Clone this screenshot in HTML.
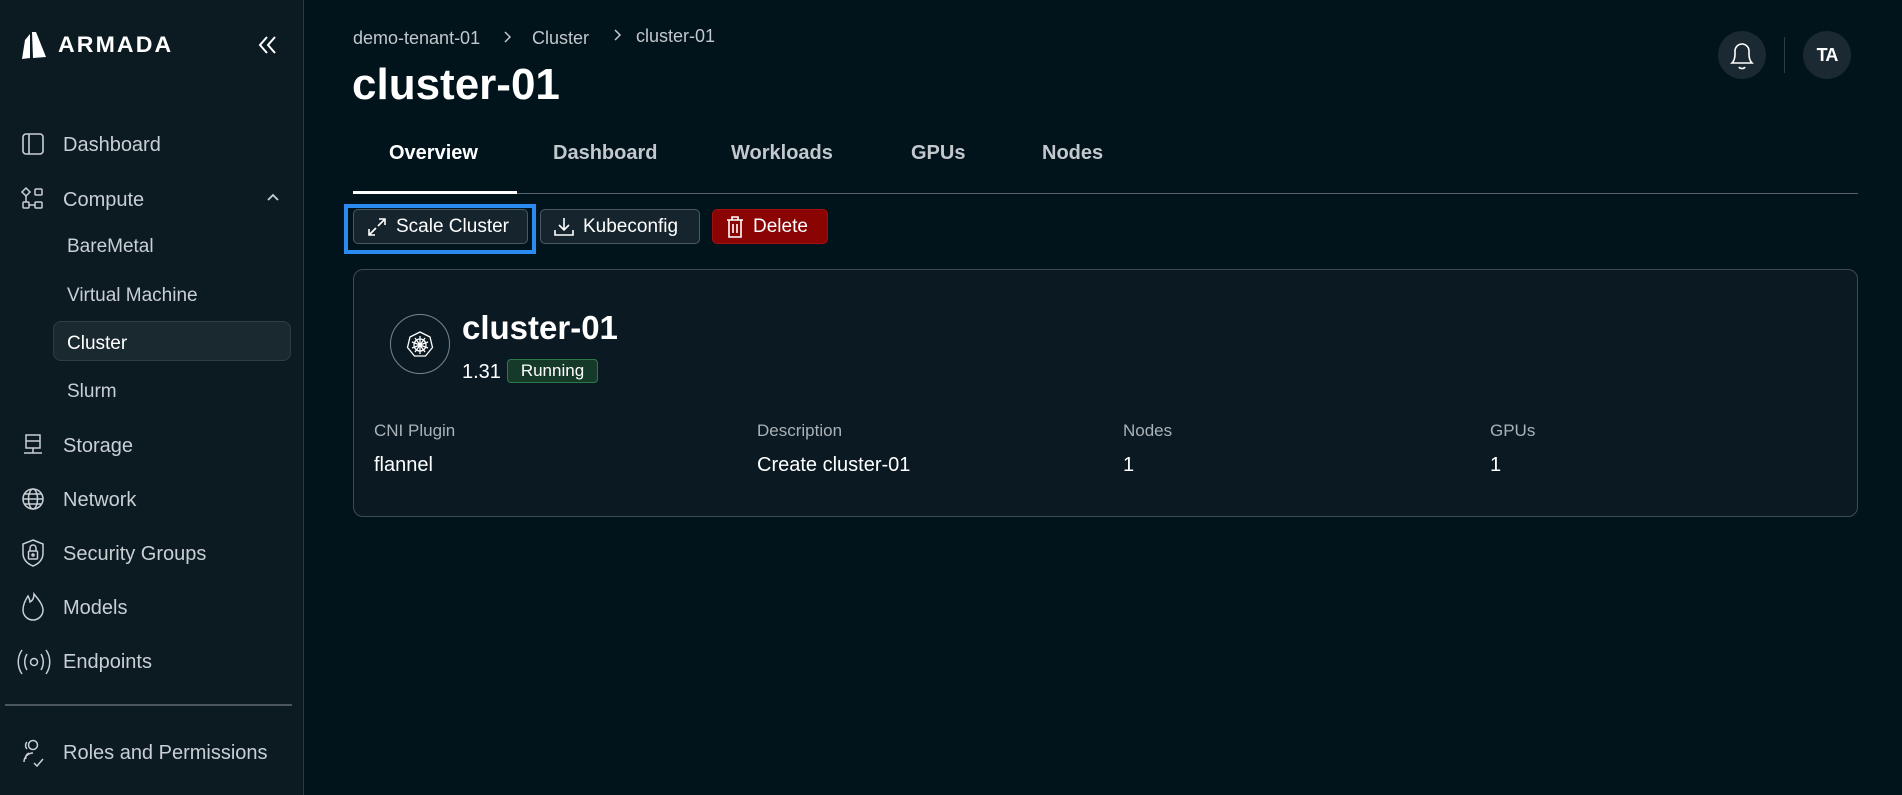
<!DOCTYPE html>
<html><head><meta charset="utf-8"><style>
*{margin:0;padding:0;box-sizing:border-box}
body{width:1902px;height:795px;background:#01131b;font-family:"Liberation Sans",sans-serif;color:#fff;position:relative;overflow:hidden}
.a{position:absolute;white-space:nowrap}
.side{position:absolute;left:0;top:0;width:304px;height:795px;background:#0c1a22;border-right:1px solid #2a3a42}
.nav{position:absolute;left:63px;font-size:20px;color:#c9d0d4;line-height:24px}
.sub{left:67px;font-size:19px}
.ic{position:absolute;left:20px;width:26px;height:26px}
.tab{position:absolute;top:142px;font-size:20px;font-weight:bold;color:#c2c8cc}
.btn{position:absolute;top:209px;height:35px;border:1px solid #4a5a62;border-radius:5px;background:#16252d;font-size:19px;color:#fff;display:flex;align-items:center;padding-left:12px;gap:8px}
.lbl{position:absolute;top:421px;font-size:17px;color:#aab2b7}
.val{position:absolute;top:454px;font-size:20px;color:#fff}
</style></head><body>
<div class="side">
 <svg class="a" style="left:18px;top:30px" width="32" height="30" viewBox="0 0 32 30"><path d="M4 29 L7 10 L12 4 L12 28 Z" fill="#fff"/><path d="M14 2 L18 2 L28 27 L15 28 Z" fill="#fff"/></svg>
 <div class="a" style="left:58px;top:32px;font-size:22px;font-weight:bold;letter-spacing:2px;transform:scaleX(1.05);transform-origin:left">ARMADA</div>
 <svg class="a" style="left:256px;top:33px" width="24" height="24" viewBox="0 0 24 24" fill="none" stroke="#fff" stroke-width="2"><path d="M11 4 L4 12 L11 20 M19 4 L12 12 L19 20"/></svg>
 <svg class="ic" style="top:131px" viewBox="0 0 26 26" fill="none" stroke="#c9d0d4" stroke-width="1.6"><rect x="3" y="3" width="20" height="20" rx="3"/><path d="M9 3v20"/></svg>
 <div class="nav" style="top:133px">Dashboard</div>
 <svg class="ic" style="top:186px" viewBox="0 0 26 26" fill="none" stroke="#c9d0d4" stroke-width="1.5"><path d="M6 2l4 4-4 4-4-4z"/><rect x="15" y="3" width="7" height="6" rx="1"/><rect x="3" y="16" width="6" height="6" rx="1"/><rect x="15" y="16" width="7" height="6" rx="1"/><path d="M9 19h6M6 10v6"/></svg>
 <div class="nav" style="top:188px">Compute</div>
 <svg class="a" style="left:266px;top:192px" width="14" height="10" viewBox="0 0 14 10" fill="none" stroke="#c9d0d4" stroke-width="1.8"><path d="M2 8l5-5 5 5"/></svg>
 <div class="nav sub" style="top:235px">BareMetal</div>
 <div class="nav sub" style="top:284px">Virtual Machine</div>
 <div class="a" style="left:53px;top:321px;width:238px;height:40px;background:#1a2830;border:1px solid #2e3d45;border-radius:8px"></div>
 <div class="nav sub" style="top:332px;color:#fff">Cluster</div>
 <div class="nav sub" style="top:380px">Slurm</div>
 <svg class="ic" style="top:432px" viewBox="0 0 26 26" fill="none" stroke="#c9d0d4" stroke-width="1.5"><rect x="6" y="3" width="14" height="13"/><path d="M6 9h14M13 16v5M4 21h18"/></svg>
 <div class="nav" style="top:434px">Storage</div>
 <svg class="ic" style="top:486px" viewBox="0 0 26 26" fill="none" stroke="#c9d0d4" stroke-width="1.5"><circle cx="13" cy="13" r="10"/><ellipse cx="13" cy="13" rx="4.5" ry="10"/><path d="M3 13h20M5 8h16M5 18h16"/></svg>
 <div class="nav" style="top:488px">Network</div>
 <svg class="ic" style="top:538px;height:30px" viewBox="0 0 26 30" fill="none" stroke="#c9d0d4" stroke-width="1.5"><path d="M13 2l10 4v9c0 7-5 11-10 13C8 26 3 22 3 15V6z"/><rect x="8.5" y="13" width="9" height="8" rx="1"/><path d="M10 13v-3a3 3 0 016 0v3"/><circle cx="13" cy="17" r="1"/></svg>
 <div class="nav" style="top:542px">Security Groups</div>
 <svg class="ic" style="top:592px;height:30px" viewBox="0 0 26 30" fill="none" stroke="#c9d0d4" stroke-width="1.5"><path d="M8 4c-4 6-5 10-5 14a10 10 0 0020 0c0-5-4-10-9-16 0 5-2 7-4 8 0-2-1-4-2-6z"/></svg>
 <div class="nav" style="top:596px">Models</div>
 <svg class="a" style="left:16px;top:647px" width="36" height="30" viewBox="0 0 36 30" fill="none" stroke="#c9d0d4" stroke-width="1.5"><path d="M6 3c-5 7-5 17 0 24M11 7c-3 5-3 11 0 16M30 3c5 7 5 17 0 24M25 7c3 5 3 11 0 16"/><circle cx="18" cy="15" r="3.5"/></svg>
 <div class="nav" style="top:650px">Endpoints</div>
 <div class="a" style="left:5px;top:704px;width:287px;height:2px;background:#4a565c"></div>
 <svg class="ic" style="top:737px;height:32px" viewBox="0 0 26 32" fill="none" stroke="#c9d0d4" stroke-width="1.5"><circle cx="13" cy="8" r="4.5"/><path d="M7 5a5 5 0 000 7M4 25c0-5 4-9 9-9M6 22c-1-3 1-5 3-6M14 26l3 3 6-7"/></svg>
 <div class="nav" style="top:741px">Roles and Permissions</div>
</div>

<div class="a" style="left:353px;top:28px;font-size:18px;color:#c2c8cc">demo-tenant-01</div>
<svg class="a" style="left:502px;top:30px" width="10" height="14" viewBox="0 0 10 14" fill="none" stroke="#c2c8cc" stroke-width="1.5"><path d="M3 2l5 5-5 5"/></svg>
<div class="a" style="left:532px;top:28px;font-size:18px;color:#c2c8cc">Cluster</div>
<svg class="a" style="left:612px;top:28px" width="10" height="14" viewBox="0 0 10 14" fill="none" stroke="#c2c8cc" stroke-width="1.5"><path d="M3 2l5 5-5 5"/></svg>
<div class="a" style="left:636px;top:26px;font-size:18px;color:#c2c8cc">cluster-01</div>
<div class="a" style="left:352px;top:60px;font-size:44px;font-weight:bold">cluster-01</div>

<div class="a" style="left:1718px;top:31px;width:48px;height:48px;border-radius:50%;background:#1b2a32"></div>
<svg class="a" style="left:1728px;top:38px" width="28" height="34" viewBox="0 0 28 34" fill="none" stroke="#fff" stroke-width="1.6"><path d="M4 25c2-2 3-5 3-9V13a7 7 0 0114 0v3c0 4 1 7 3 9z"/><path d="M11 29c1 2 5 2 6 0"/></svg>
<div class="a" style="left:1784px;top:37px;width:1px;height:36px;background:#2e3d45"></div>
<div class="a" style="left:1803px;top:31px;width:48px;height:48px;border-radius:50%;background:#1b2a32;font-size:18px;font-weight:bold;line-height:48px;text-align:center;letter-spacing:-1px">TA</div>

<div class="tab" style="left:389px;color:#fff">Overview</div>
<div class="tab" style="left:553px">Dashboard</div>
<div class="tab" style="left:731px">Workloads</div>
<div class="tab" style="left:911px">GPUs</div>
<div class="tab" style="left:1042px">Nodes</div>
<div class="a" style="left:353px;top:193px;width:1505px;height:1px;background:#5a666c"></div>
<div class="a" style="left:353px;top:191px;width:164px;height:3px;background:#fff"></div>

<div class="a" style="left:344px;top:204px;width:192px;height:50px;border:4px solid #2a8cf0"></div>
<div class="btn" style="left:353px;width:175px"><svg width="22" height="22" viewBox="0 0 22 22" fill="none" stroke="#fff" stroke-width="1.6"><path d="M13 3h6v6M19 3l-7 7M9 19H3v-6M3 19l7-7"/></svg>Scale Cluster</div>
<div class="btn" style="left:540px;width:160px"><svg width="22" height="22" viewBox="0 0 22 22" fill="none" stroke="#fff" stroke-width="1.6"><path d="M11 2v12M6 9l5 5 5-5M2 14v5h18v-5"/></svg>Kubeconfig</div>
<div class="btn" style="left:712px;width:116px;background:#8a0404;border-color:#a01010"><svg width="20" height="24" viewBox="0 0 20 24" fill="none" stroke="#fff" stroke-width="1.6"><path d="M2 5h16M7 5V2h6v3M4 5v17h12V5M8 9v9M12 9v9"/></svg>Delete</div>

<div class="a" style="left:353px;top:269px;width:1505px;height:248px;border:1px solid #3e4b52;border-radius:10px;background:#0b1a22"></div>
<div class="a" style="left:390px;top:314px;width:60px;height:60px;border:1px solid #7a8489;border-radius:50%"></div>
<svg class="a" style="left:404px;top:328px" width="32" height="32" viewBox="0 0 32 32" fill="none" stroke="#fff" stroke-width="1.3"><path d="M16 4l10 5 2.5 10.5-7 8.5H10.5l-7-8.5L6 9z"/><circle cx="16" cy="17" r="6"/><path d="M16 8v18M8 14l16 6M24 14L8 20M11 24l10-14M21 24L11 10"/></svg>
<div class="a" style="left:462px;top:309px;font-size:33px;font-weight:bold">cluster-01</div>
<div class="a" style="left:462px;top:361px;font-size:20px">1.31</div>
<div class="a" style="left:507px;top:359px;width:91px;height:24px;background:#163a2a;border:1px solid #2c7a4c;border-radius:4px;font-size:17px;line-height:22px;text-align:center">Running</div>
<div class="lbl" style="left:374px">CNI Plugin</div><div class="val" style="left:374px">flannel</div>
<div class="lbl" style="left:757px">Description</div><div class="val" style="left:757px">Create cluster-01</div>
<div class="lbl" style="left:1123px">Nodes</div><div class="val" style="left:1123px">1</div>
<div class="lbl" style="left:1490px">GPUs</div><div class="val" style="left:1490px">1</div>
</body></html>
